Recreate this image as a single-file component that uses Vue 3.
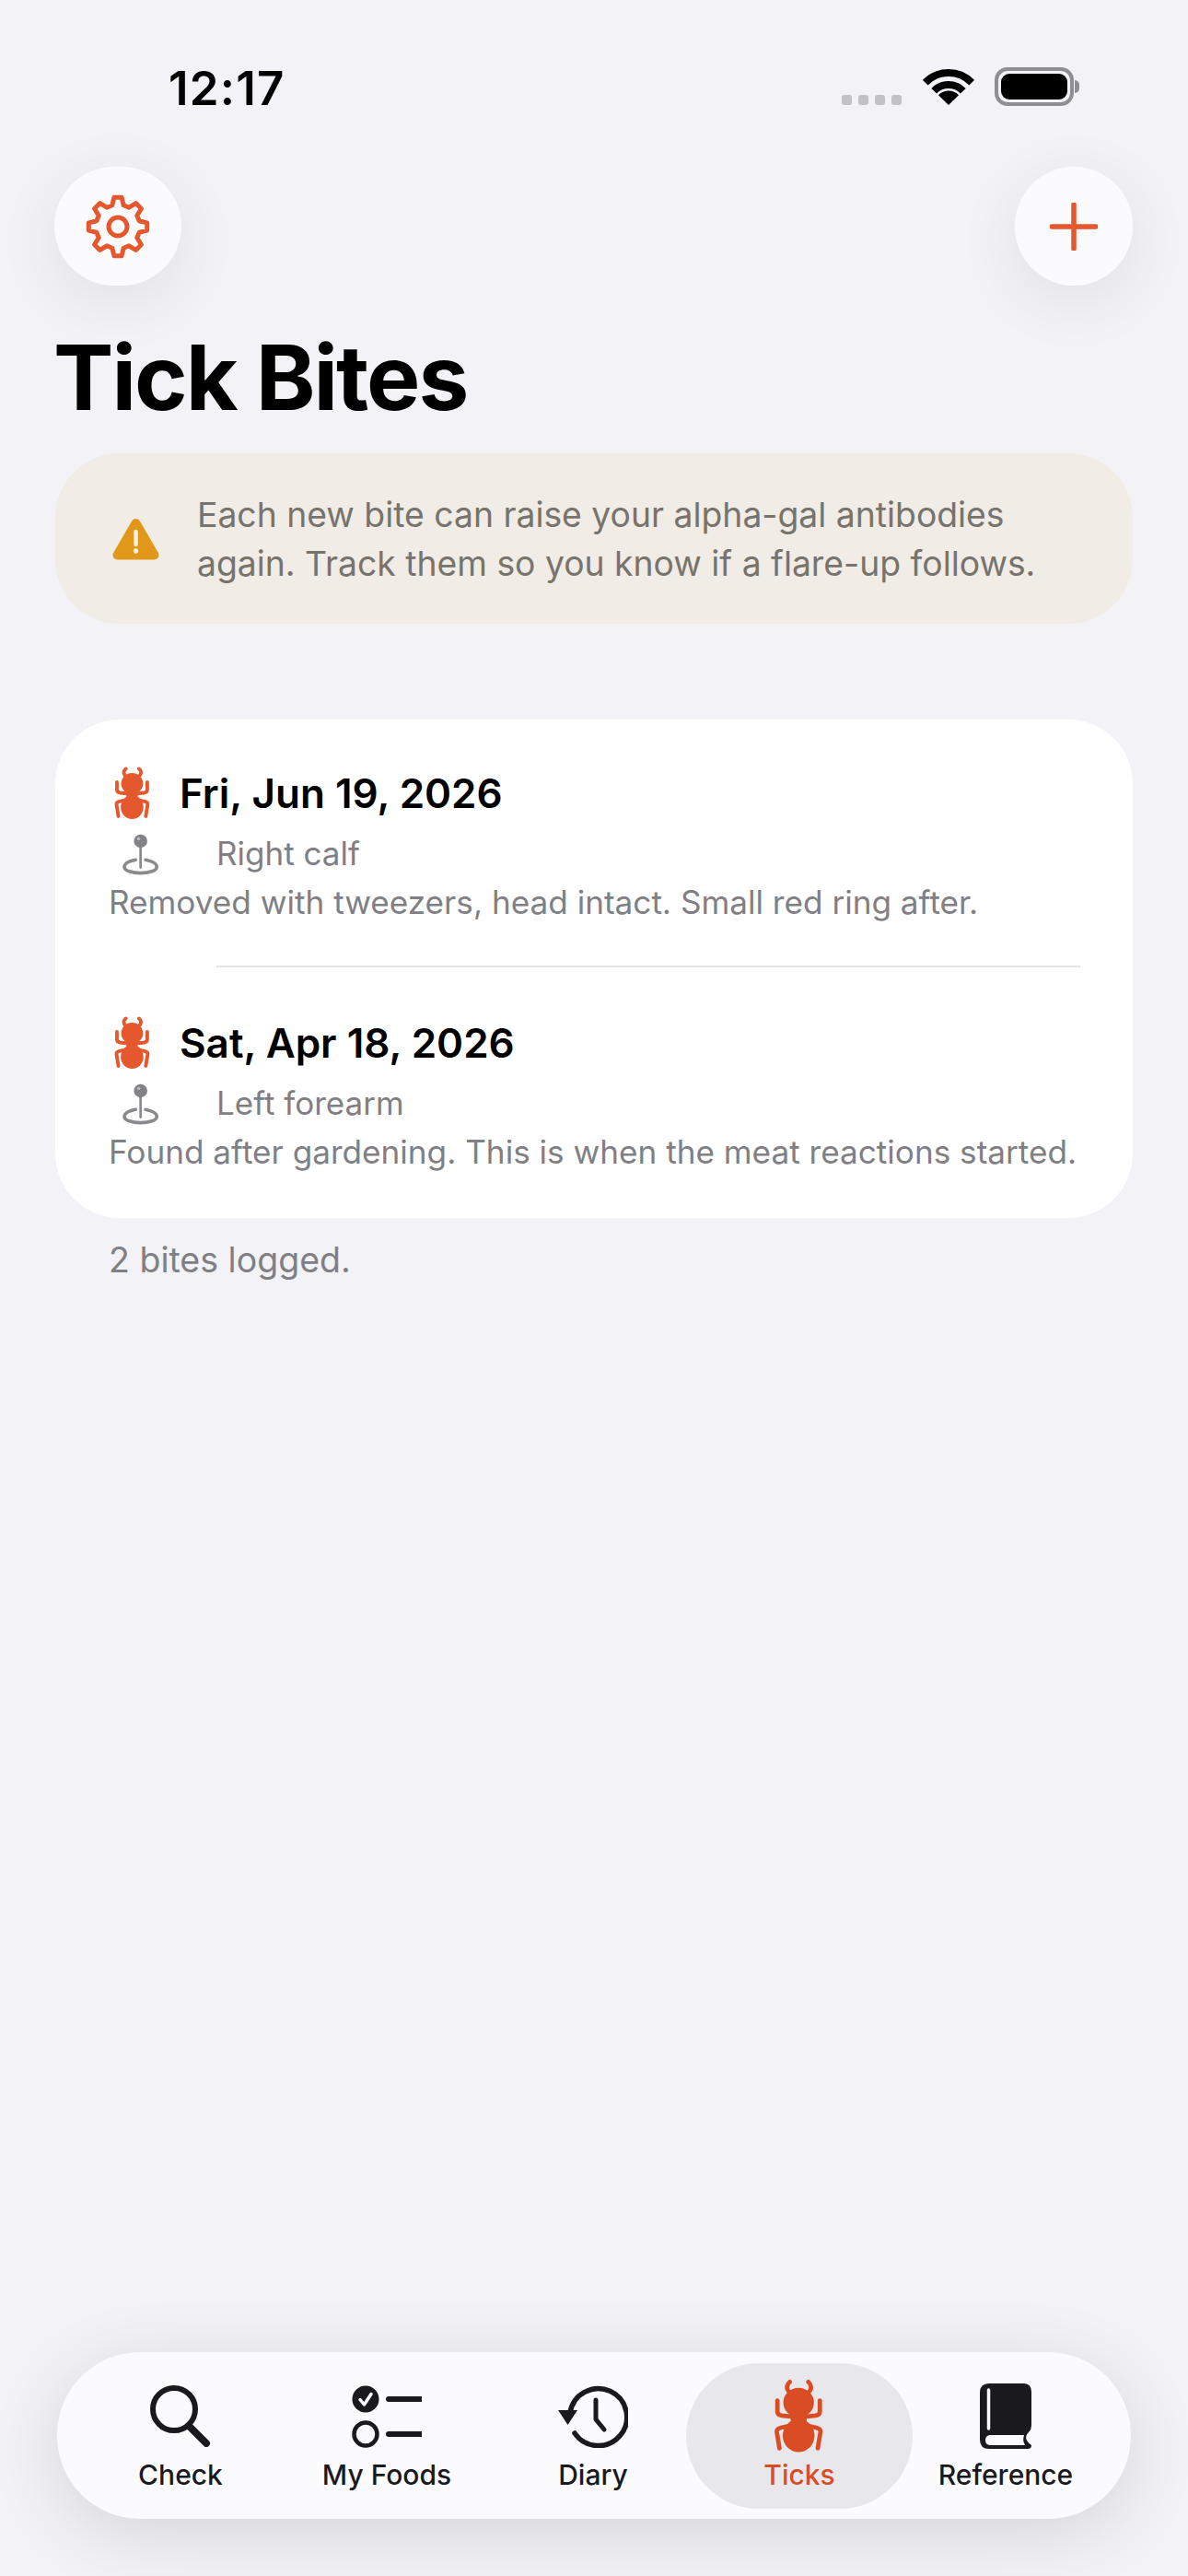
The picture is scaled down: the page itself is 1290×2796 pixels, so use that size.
<template>
  <div class="screen">
    <div class="status">
      <span class="time">12:17</span>
      <div class="status-icons">
        <div class="dots"><i></i><i></i><i></i><i></i></div>
        <svg class="wifi" viewBox="0 0 56 41" width="56" height="41">
          <path d="M2.8 16.7A35 35 0 0 1 53.2 16.7M12.2 25.7A22 22 0 0 1 43.8 25.7" fill="none" stroke="#000" stroke-width="8" />
          <path d="M28 41L17 30.2A15.5 15.5 0 0 1 39 30.2Z" fill="#000" />
        </svg>
        <div class="battery"><div class="battery-fill"></div></div>
      </div>
    </div>

    <div class="actions">
      <button class="round-btn gear-btn">
        <svg viewBox="0 0 70 70" width="70" height="70">
          <path :d="gearPath" fill="none" stroke="#e5582e" stroke-width="5" stroke-linejoin="round" />
          <circle cx="35" cy="35" r="10" fill="none" stroke="#e5582e" stroke-width="5" />
        </svg>
      </button>
      <button class="round-btn plus-btn">
        <svg viewBox="0 0 52 52" width="52" height="52">
          <path d="M26 2V50M2 26H50" stroke="#e5582e" stroke-width="5.5" stroke-linecap="round" />
        </svg>
      </button>
    </div>

    <h1>Tick Bites</h1>

    <div class="banner">
      <svg class="warn" viewBox="0 0 51 46" width="51" height="46">
        <path d="M25.5 6L5.5 40.5H45.5Z" fill="#e1981a" stroke="#e1981a" stroke-width="10" stroke-linejoin="round" />
        <path d="M25.5 15V29" stroke="#f6efe2" stroke-width="4.5" stroke-linecap="round" />
        <circle cx="25.5" cy="36" r="2.7" fill="#f6efe2" />
      </svg>
      <p>Each new bite can raise your alpha-gal antibodies again. Track them so you know if a flare-up follows.</p>
    </div>

    <div class="card">
      <template v-for="(bite, i) in bites" :key="bite.date">
        <div class="divider" v-if="i > 0"></div>
        <div class="bite">
          <div class="bite-head">
            <svg viewBox="120 30 175 252" width="40" height="58">
              <g fill="#e5582e">
                <ellipse cx="205" cy="110" rx="52" ry="50" />
                <rect x="178" y="140" width="54" height="55" />
                <ellipse cx="205" cy="222" rx="54" ry="56" />
              </g>
              <path :d="bugLegs" fill="none" stroke="#e5582e" stroke-width="17" stroke-linecap="round" stroke-linejoin="round" />
            </svg>
            <span class="date">{{ bite.date }}</span>
          </div>
          <div class="bite-place">
            <svg viewBox="90 250 135 155" width="41" height="48">
              <path d="M140 345C115 350 100 358 100 370C100 384 128 392 158 392C188 392 216 384 216 370C216 358 200 350 176 345" fill="none" stroke="#8a8a8e" stroke-width="12" stroke-linecap="round" />
              <path d="M158 285V372" stroke="#8a8a8e" stroke-width="9" stroke-linecap="round" />
              <circle cx="158" cy="278" r="24" fill="#838387" />
              <circle cx="151" cy="270" r="6" fill="#b9b9bc" />
            </svg>
            <span class="place">{{ bite.place }}</span>
          </div>
          <p class="note">{{ bite.note }}</p>
        </div>
      </template>
    </div>

    <p class="count">2 bites logged.</p>

    <nav class="tabs">
      <div class="tab">
        <div class="tab-icon">
          <svg viewBox="0 0 66 67" width="66" height="67">
            <ellipse cx="26" cy="26" rx="23" ry="23" fill="none" stroke="#1a1a1e" stroke-width="6" />
            <path d="M42 44L61 63" stroke="#1a1a1e" stroke-width="8" stroke-linecap="round" />
          </svg>
        </div>
        <span>Check</span>
      </div>
      <div class="tab">
        <div class="tab-icon">
          <svg viewBox="0 0 76 68" width="76" height="68">
            <circle cx="15" cy="15" r="14.5" fill="#1a1a1e" />
            <path d="M9 15.5L13.5 21L21 9.5" fill="none" stroke="#fbfbfe" stroke-width="3.5" stroke-linecap="round" stroke-linejoin="round" />
            <circle cx="15" cy="53" r="12.5" fill="none" stroke="#1a1a1e" stroke-width="4.5" />
            <path d="M40 15H75M40 53H75" stroke="#1a1a1e" stroke-width="6" stroke-linecap="round" />
          </svg>
        </div>
        <span>My Foods</span>
      </div>
      <div class="tab">
        <div class="tab-icon">
          <svg viewBox="0 0 76 68" width="76" height="68">
            <path d="M13 30A31 31 0 1 1 18 52" fill="none" stroke="#1a1a1e" stroke-width="5.5" stroke-linecap="round" />
            <path d="M0 27H21L10.5 43Z" fill="#1a1a1e" />
            <path d="M41 16V37L50 48" fill="none" stroke="#1a1a1e" stroke-width="5" stroke-linecap="round" stroke-linejoin="round" />
          </svg>
        </div>
        <span>Diary</span>
      </div>
      <div class="tab active">
        <div class="tab-icon">
          <svg viewBox="120 30 175 252" width="56" height="81">
            <g fill="#da4d24">
              <ellipse cx="205" cy="110" rx="52" ry="50" />
              <rect x="178" y="140" width="54" height="55" />
              <ellipse cx="205" cy="222" rx="54" ry="56" />
            </g>
            <path :d="bugLegs" fill="none" stroke="#da4d24" stroke-width="15" stroke-linecap="round" stroke-linejoin="round" />
          </svg>
        </div>
        <span>Ticks</span>
      </div>
      <div class="tab">
        <div class="tab-icon">
          <svg viewBox="0 0 56 72" width="56" height="72">
            <path d="M10 0H47Q56 0 56 9V46Q56 50 53 53Q46 60 56 67Q56 71 52 71H10Q0 71 0 61V10Q0 0 10 0Z" fill="#1a1a1e" />
            <path d="M9.5 7V49" stroke="#fbfbfe" stroke-width="3.5" stroke-linecap="round" />
            <path d="M12 56H48Q46 62 49 67H12Q6 67 6 61.5Q6 56 12 56Z" fill="#fbfbfe" />
          </svg>
        </div>
        <span>Reference</span>
      </div>
    </nav>
  </div>
</template>

<script setup>
const bites = [
  {
    date: 'Fri, Jun 19, 2026',
    place: 'Right calf',
    note: 'Removed with tweezers, head intact. Small red ring after.'
  },
  {
    date: 'Sat, Apr 18, 2026',
    place: 'Left forearm',
    note: 'Found after gardening. This is when the meat reactions started.'
  }
]

const bugLegs =
  'M175 40Q155 60 178 78M238 40Q258 60 235 78' +
  'M133 103V140Q133 152 148 154L185 158M277 103V140Q277 152 262 154L225 158' +
  'M140 265L131 210Q130 198 145 195L190 185M270 265L279 210Q280 198 265 195L220 185'

// 8 teeth, walked round the centre
function buildGear() {
  const pts = []
  for (let i = 0; i < 8; i++) {
    const a = (i * Math.PI) / 4 - Math.PI / 2
    const spots = [[-0.26, 24], [-0.13, 32], [0.13, 32], [0.26, 24]]
    for (const [off, r] of spots) {
      pts.push([35 + r * Math.cos(a + off), 35 + r * Math.sin(a + off)])
    }
  }
  return 'M' + pts.map(p => p[0].toFixed(1) + ' ' + p[1].toFixed(1)).join('L') + 'Z'
}

const gearPath = buildGear()
</script>

<style>
html, body {
  margin: 0;
  background: #f2f2f7;
}
</style>

<style scoped>
.screen {
  width: 1290px;
  height: 2796px;
  background: #f2f2f7;
  font-family: Inter, "Liberation Sans", sans-serif;
  display: flex;
  flex-direction: column;
  overflow: hidden;
  box-sizing: border-box;
  padding: 0 60px 62px;
}

.status {
  display: flex;
  justify-content: space-between;
  align-items: flex-start;
  height: 181px;
  padding: 66px 64px 0 123px;
  box-sizing: border-box;
}

.time {
  font-size: 51px;
  font-weight: 600;
  line-height: 60px;
  color: #000;
  letter-spacing: 1.2px;
}

.status-icons {
  display: flex;
  align-items: flex-start;
  padding-top: 7px;
}

.dots {
  display: flex;
  gap: 7px;
  margin-top: 30px;
  margin-right: 23px;
}

.dots i {
  width: 11px;
  height: 11px;
  border-radius: 3px;
  background: #c1c1c6;
}

.wifi {
  margin-right: 22px;
}

.battery {
  position: relative;
  width: 86px;
  height: 42px;
  border: 4px solid #8e8e93;
  border-radius: 14px;
  box-sizing: border-box;
  padding: 3px;
}

.battery::after {
  content: '';
  position: absolute;
  right: -10px;
  top: 10px;
  width: 5px;
  height: 14px;
  background: #8e8e93;
  border-radius: 0 5px 5px 0;
}

.battery-fill {
  height: 100%;
  background: #000;
  border-radius: 9px;
}

.actions {
  display: flex;
  justify-content: space-between;
}

.round-btn {
  height: 129px;
  border: 0;
  padding: 0;
  border-radius: 65px;
  background: #fbfbfe;
  box-shadow: 0 16px 70px rgba(0, 0, 0, 0.08);
  display: flex;
  align-items: center;
  justify-content: center;
}

.gear-btn {
  width: 138px;
  margin-left: -1px;
}

.plus-btn {
  width: 128px;
}

h1 {
  margin: 41px 0 0 -2px;
  font-size: 98px;
  line-height: 117px;
  font-weight: 700;
  color: #000;
  letter-spacing: -2px;
}

.banner {
  margin-top: 24px;
  height: 185px;
  background: #f1ece6;
  border-radius: 70px;
  display: flex;
  align-items: center;
  padding: 0 62px;
  gap: 41px;
}

.warn {
  flex: none;
}

.banner p {
  margin: 0;
  font-size: 37.3px;
  line-height: 53px;
  color: #77736d;
}

.card {
  margin-top: 104px;
  background: #fff;
  border-radius: 70px;
  padding: 0 57px 0 58px;
  height: 541px;
  box-sizing: border-box;
}

.bite {
  padding-top: 51px;
  height: 267px;
  box-sizing: border-box;
}

.bite:last-child {
  padding-top: 53px;
}

.divider {
  height: 2px;
  margin-left: 117px;
  background: #e3e3e6;
}

.bite-head {
  display: flex;
  align-items: center;
  height: 58px;
  padding-left: 6px;
  gap: 31px;
}

.date {
  font-size: 44px;
  font-weight: 600;
  color: #000;
}

.bite-place {
  display: flex;
  align-items: center;
  height: 48px;
  margin-top: 14px;
  padding-left: 14px;
  gap: 62px;
  font-size: 35px;
  color: #808084;
}

.place {
  padding-bottom: 5px;
}

.note {
  margin: 5px 0 0;
  font-size: 35.15px;
  line-height: 44px;
  color: #808084;
}

.count {
  margin: 24px 0 0 58px;
  font-size: 37.5px;
  line-height: 44px;
  color: #808084;
}

.tabs {
  margin-top: auto;
  height: 181px;
  box-sizing: border-box;
  padding: 12px 24px 11px 22px;
  margin-left: 2px;
  margin-right: 2px;
  background: #fbfbfe;
  border-radius: 90px;
  box-shadow: 0 16px 80px rgba(0, 0, 0, 0.12);
  display: grid;
  grid-template-columns: repeat(5, 1fr);
}

.tab {
  display: flex;
  flex-direction: column;
  align-items: center;
  padding-top: 17px;
  font-size: 30px;
  font-weight: 500;
  line-height: 36px;
  color: #1a1a1e;
}

.tab-icon {
  height: 81px;
  display: flex;
  align-items: center;
  justify-content: center;
  margin-bottom: 5px;
}

.tab.active {
  margin: 0 -11px;
  border-radius: 79px;
  background: #e8e8ec;
  color: #da4d24;
}
</style>
